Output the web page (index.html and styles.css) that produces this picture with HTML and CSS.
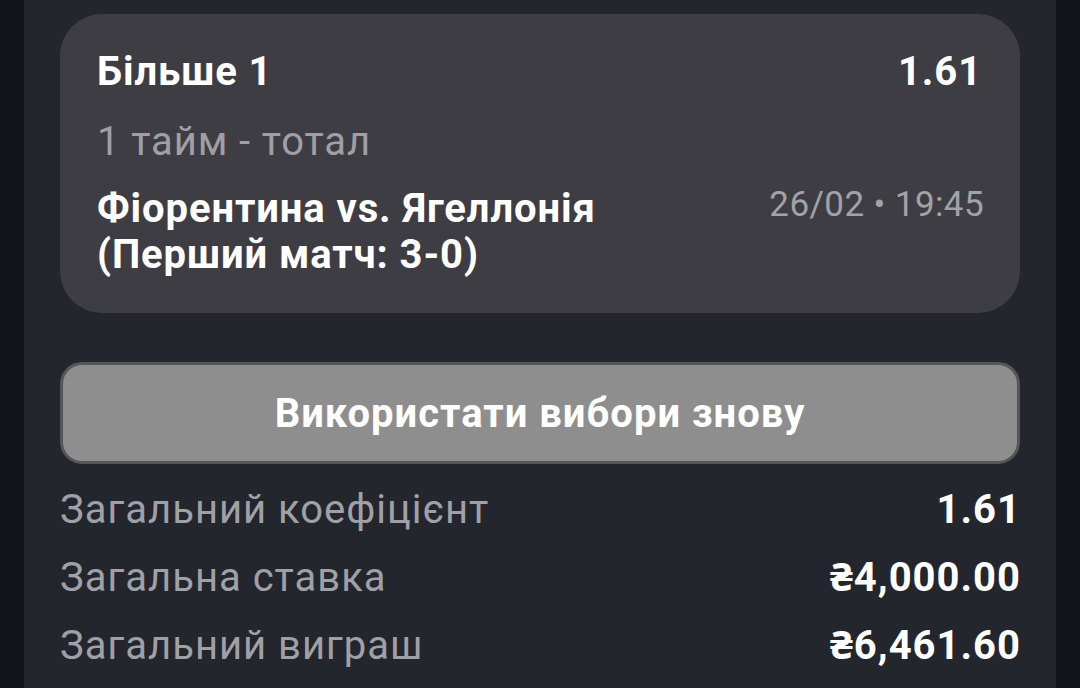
FILE: index.html
```html
<!DOCTYPE html>
<html lang="uk">
<head>
<meta charset="utf-8">
<link rel="stylesheet" href="styles.css">
</head>
<body>
<div class="panel">
  <div class="card">
    <div class="row">
      <span class="title">Більше 1</span>
      <span class="odds">1.61</span>
    </div>
    <div class="market">1 тайм - тотал</div>
    <div class="row event-row">
      <span class="event">Фіорентина vs. Ягеллонія<br>(Перший матч: 3-0)</span>
      <span class="date">26/02 • 19:45</span>
    </div>
  </div>
  <button class="reuse">Використати вибори знову</button>
  <div class="summary">
    <div class="sum-row"><span class="label">Загальний коефіцієнт</span><span class="value">1.61</span></div>
    <div class="sum-row"><span class="label">Загальна ставка</span><span class="value">₴4,000.00</span></div>
    <div class="sum-row"><span class="label">Загальний виграш</span><span class="value">₴6,461.60</span></div>
  </div>
</div>
</body>
</html>
```

FILE: styles.css
```css
html, body {
  margin: 0;
  padding: 0;
  height: 100%;
}
body {
  background: #11141b;
  font-family: Roboto, "Noto Sans", sans-serif;
  color: #ffffff;
  overflow: hidden;
}
.panel {
  margin: 0 24px;
  height: 100%;
  background: #24262d;
  padding: 14px 36px 0;
  box-sizing: border-box;
}
.card {
  background: #3e3d44;
  border-radius: 42px;
  padding: 35px 37px 35px 37px;
}
.row {
  display: flex;
  justify-content: space-between;
  align-items: flex-start;
}
.title, .odds {
  font-size: 40px;
  line-height: 46px;
  font-weight: 700;
  letter-spacing: 0.9px;
}
.odds {
  margin-right: 1px;
}
.market {
  font-size: 40px;
  line-height: 46px;
  color: #a09fa5;
  margin-top: 24px;
  letter-spacing: 0.9px;
}
.event-row {
  margin-top: 21px;
}
.event {
  font-size: 40px;
  line-height: 46px;
  font-weight: 700;
  letter-spacing: 0.9px;
}
.date {
  font-size: 35px;
  line-height: 46px;
  color: #a3a2a8;
  margin-top: -4px;
  letter-spacing: 0.4px;
  margin-right: -1px;
}
.reuse {
  display: block;
  width: 100%;
  margin-top: 49px;
  height: 102px;
  background: #8e8e8e;
  border: 3px solid #56565a;
  border-radius: 22px;
  color: #ffffff;
  font-family: Roboto, "Noto Sans", sans-serif;
  font-size: 40px;
  font-weight: 700;
  letter-spacing: 1px;
  padding: 0;
}
.summary {
  margin-top: 12px;
}
.sum-row {
  display: flex;
  justify-content: space-between;
  height: 68px;
  line-height: 68px;
  font-size: 40px;
  letter-spacing: 1px;
}
.label {
  color: #a0a1a6;
}
.value {
  font-weight: 700;
  color: #ffffff;
  margin-right: -1px;
}
```
